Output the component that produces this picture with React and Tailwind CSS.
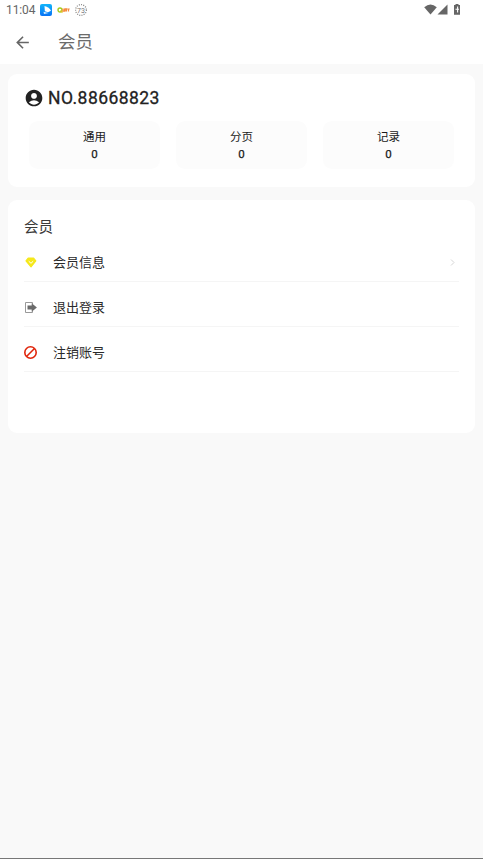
import { MdAccountCircle, MdArrowBack } from 'react-icons/md';

const stats = [
  { label: '通用', value: 0 },
  { label: '分页', value: 0 },
  { label: '记录', value: 0 },
];

const GemIcon = () => (
  <svg width="12" height="11" viewBox="0 0 12 11">
    <path d="M3.200 1h5.400l2.200 2.900L6 9.900 1 3.900z" fill="#f5e81b" stroke="#f5e81b" strokeWidth="1.200" strokeLinejoin="round" />
    <path d="M3.700 4.200 6 6.300 8.200 4.200" fill="none" stroke="#fff" strokeWidth="1" />
  </svg>
);

const ExitIcon = () => (
  <svg width="12" height="11" viewBox="0 0 12 11">
    <path d="M7.500 2V.5H.5v10h7V9" fill="none" stroke="#999" strokeWidth="1" />
    <path d="M2.500 3.400h4.200V1.300l5.200 4.200-5.200 4.200V7.600H2.500z" fill="#6b6b6b" />
  </svg>
);

const BanIcon = () => (
  <svg width="13" height="13" viewBox="0 0 13 13" fill="none" stroke="#e0260c" strokeWidth="1.6">
    <circle cx="6.5" cy="6.5" r="5.7" />
    <path d="m10.500 2.500-8 8" />
  </svg>
);

const menu = [
  { label: '会员信息', icon: <GemIcon />, arrow: true },
  { label: '退出登录', icon: <ExitIcon /> },
  { label: '注销账号', icon: <BanIcon /> },
];

const StatusBar = () => (
  <div className="flex h-5 items-center justify-between pl-1.5 pr-[22px]">
    <div className="flex items-center">
      <span className="w-[30px] text-[12px] leading-5 tracking-[-0.1px] text-[#666]">11:04</span>
      <svg className="ml-1" width="12" height="12" viewBox="0 0 12 12">
        <defs>
          <linearGradient id="app" x1="0" y1="0" x2="0" y2="1">
            <stop offset="0" stopColor="#12b5fa" />
            <stop offset="1" stopColor="#0872f5" />
          </linearGradient>
        </defs>
        <rect width="12" height="12" rx="2" fill="url(#app)" />
        <path d="M4.500 2c3 .6 5.700 2.600 6.500 4.700L8 8.200 4.800 7.200z" fill="#fff" />
        <path d="M3.500 7.800 8.500 9l-4.500.9z" fill="#d8efff" />
      </svg>
      <svg className="ml-[5px]" width="13" height="8" viewBox="0 0 13 8">
        <circle cx="3" cy="4" r="2" fill="none" stroke="#a5cc18" strokeWidth="1.400" />
        <path d="M3.500 4.500 5.500 6.500" stroke="#e0c020" strokeWidth="1.400" />
        <path d="M6 2.500v2.700h1.500V2.500M8.200 5.500V2.800h1.300v2.700M10.200 3h2.500M11.500 3v2.500" fill="none" stroke="#f58b3c" strokeWidth="1.200" />
      </svg>
      <svg className="ml-[5px]" width="13" height="13" viewBox="0 0 13 13">
        <circle cx="6" cy="6" r="5.400" fill="none" stroke="#888" strokeWidth="1.300" strokeDasharray="1 1.260" />
        <text x="6" y="8.500" textAnchor="middle" fontSize="7" fill="#777">73</text>
      </svg>
    </div>
    <div className="mb-0.5 flex items-center">
      <svg width="13" height="11" viewBox="0 0 13 11" fill="#666">
        <path d="M6.500 10.500.2 3.200Q6.500-2.400 12.800 3.200z" />
      </svg>
      <svg width="11" height="11" viewBox="0 0 11 11" fill="#666">
        <path d="M10.500.5v10H.5z" />
      </svg>
      <svg className="ml-[5px]" width="8" height="11" viewBox="0 0 8 11">
        <path d="M2.500 0h3v1h1.500v9.700H1V1h1.500z" fill="#666" />
        <path d="M4.600 2.500v6M2.500 5.300h3.500" stroke="#fff" strokeWidth="1.100" />
      </svg>
    </div>
  </div>
);

const App = () => {
  return (
    <div className="flex h-screen flex-col border-b border-[#777] bg-[#f9f9f9] font-[Roboto,'Noto_Sans_CJK_SC',sans-serif]">
      <header className="h-16 bg-white">
        <StatusBar />
        <div className="flex h-11 items-center pl-3.5">
          <MdArrowBack size={19} className="-ml-px text-[#666]" />
          <h1 className="ml-[26px] text-[17.500px] leading-6 text-[#6b6b6b]">会员</h1>
        </div>
      </header>

      <section className="mx-2 mt-2.5 h-[113px] rounded-[9px] bg-white px-[17px] pt-3.5">
        <div className="flex h-5 items-center">
          <MdAccountCircle size={20} className="-ml-px text-[#222]" />
          <span className="ml-1 text-[17.500px] leading-5 tracking-[0.45px] text-[#222] [-webkit-text-stroke:0.300px_#222]">NO.88668823</span>
        </div>
        <div className="mx-1 mt-[13px] grid grid-cols-3 gap-4">
          {stats.map((item) => (
            <div key={item.label} className="flex h-12 flex-col items-center rounded-[9px] bg-[#fcfcfc] pt-[7px] text-[11.500px] text-[#1a1a1a]">
              <span className="leading-[18px]">{item.label}</span>
              <span className="leading-4 [-webkit-text-stroke:0.25px_#1a1a1a]">{item.value}</span>
            </div>
          ))}
        </div>
      </section>

      <section className="mx-2 mt-[13px] h-[233px] rounded-[9px] bg-white px-4 pt-[15px]">
        <h2 className="pt-[3px] text-[14.500px] leading-[19px] text-[#3a3a3a]">会员</h2>
        <ul>
          {menu.map((item) => (
            <li key={item.label} className="flex h-[45px] items-center border-b border-[#f5f5f5] pt-[7px]">
              <span className="flex w-[13px] justify-center">{item.icon}</span>
              <span className="ml-4 mt-px text-[13px] leading-5 text-[#2a2a2a]">{item.label}</span>
              {item.arrow && (
                <svg className="mb-px ml-auto mr-1" width="5" height="7" viewBox="0 0 5 7" fill="none" stroke="#d5d5d5">
                  <path d="M1 .5 4 3.500 1 6.500" />
                </svg>
              )}
            </li>
          ))}
        </ul>
      </section>
    </div>
  );
};

export default App;
